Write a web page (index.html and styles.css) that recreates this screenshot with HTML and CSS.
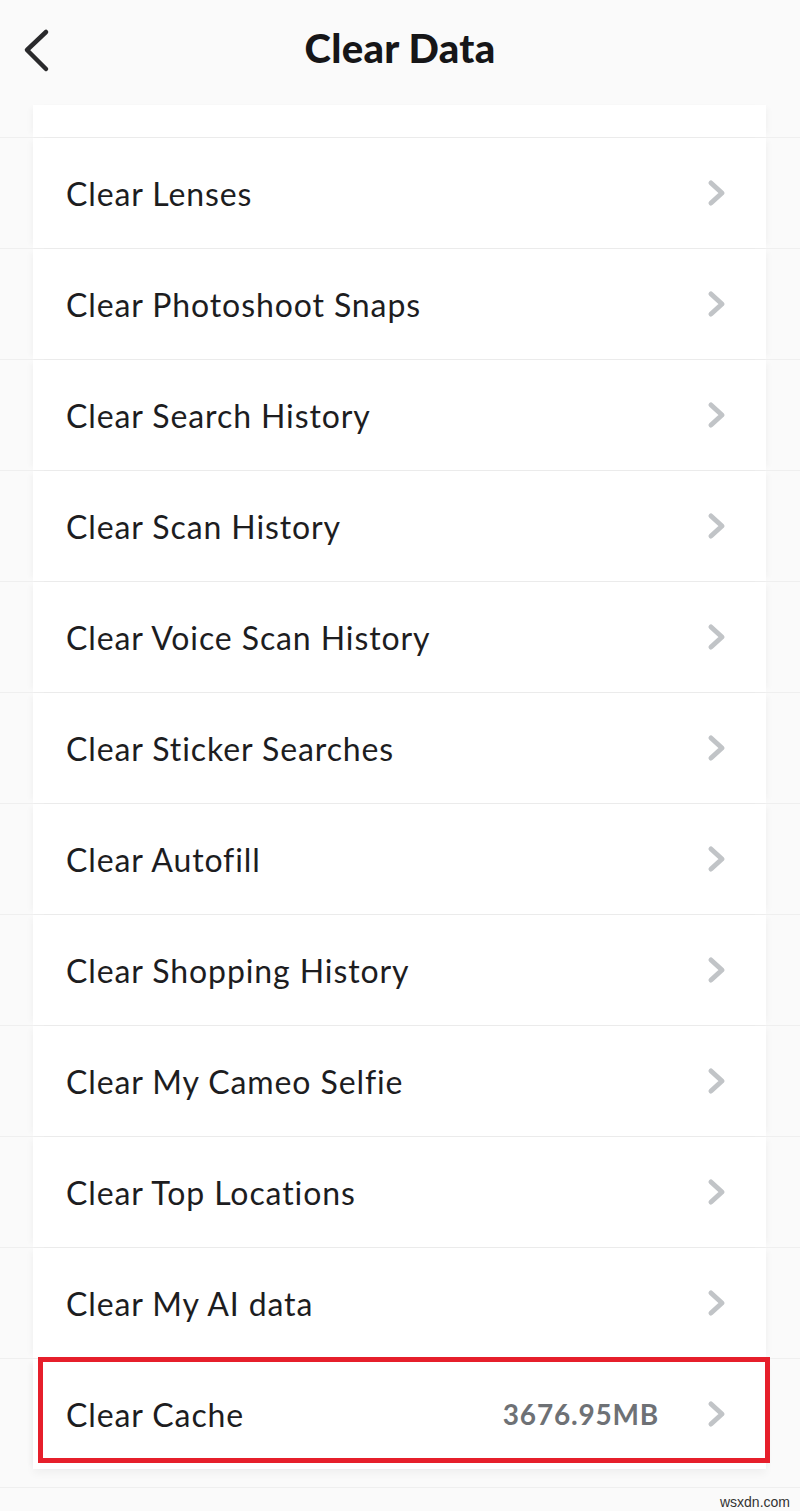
FILE: index.html
```html
<!DOCTYPE html>
<html lang="en">
<head>
    <meta charset="UTF-8">
    <meta name="viewport" content="width=device-width, initial-scale=1.0">
    <title>Clear Data</title>
    <link rel="stylesheet" href="styles.css">
</head>
<body>
    <header class="topbar">
        <button class="back" aria-label="Back">
            <svg width="30" height="46" viewBox="0 0 30 46"><path d="M26 5 L7 23 L26 42" fill="none" stroke="#2a2a2c" stroke-width="4.5" stroke-linecap="round" stroke-linejoin="round"/></svg>
        </button>
        <h1 class="title">Clear Data</h1>
    </header>

    <main class="list">
        <div class="row row-top"><div class="cell"></div></div>
        <div class="row"><div class="cell"><span class="label">Clear Lenses</span><span class="chev"></span></div></div>
        <div class="row"><div class="cell"><span class="label">Clear Photoshoot Snaps</span><span class="chev"></span></div></div>
        <div class="row"><div class="cell"><span class="label">Clear Search History</span><span class="chev"></span></div></div>
        <div class="row"><div class="cell"><span class="label">Clear Scan History</span><span class="chev"></span></div></div>
        <div class="row"><div class="cell"><span class="label">Clear Voice Scan History</span><span class="chev"></span></div></div>
        <div class="row"><div class="cell"><span class="label">Clear Sticker Searches</span><span class="chev"></span></div></div>
        <div class="row"><div class="cell"><span class="label">Clear Autofill</span><span class="chev"></span></div></div>
        <div class="row"><div class="cell"><span class="label">Clear Shopping History</span><span class="chev"></span></div></div>
        <div class="row"><div class="cell"><span class="label">Clear My Cameo Selfie</span><span class="chev"></span></div></div>
        <div class="row"><div class="cell"><span class="label">Clear Top Locations</span><span class="chev"></span></div></div>
        <div class="row"><div class="cell"><span class="label">Clear My AI data</span><span class="chev"></span></div></div>
        <div class="row"><div class="cell cell-last"><span class="label">Clear Cache</span><span class="value">3676.95MB</span><span class="chev"></span><div class="highlight"></div></div></div>
    </main>

    <footer class="footer">
        <span class="mark">wsxdn.com</span>
    </footer>

    <script>
        // draw the same grey chevron in every row
        document.querySelectorAll('.chev').forEach(el => {
            el.innerHTML = '<svg width="20" height="28" viewBox="0 0 20 28"><path d="M4 4 L15 14 L4 24" fill="none" stroke="#c1c4c7" stroke-width="5" stroke-linecap="round" stroke-linejoin="round"/></svg>';
        });
    </script>
</body>
</html>
```

FILE: styles.css
```css
body {
    margin: 0;
    background-color: #fafafa;
    font-family: Lato, "Liberation Sans", sans-serif;
    color: #1c1c1e;
}
.topbar {
    position: relative;
    height: 96px;
    padding-bottom: 9px;
    display: flex;
    align-items: center;
    justify-content: center;
}
.back {
    position: absolute;
    left: 20px;
    top: 27px;
    padding: 0;
    border: none;
    background: none;
    line-height: 0;
}
.title {
    margin: 0;
    font-size: 40px;
    font-weight: 900;
    letter-spacing: 0.3px;
    color: #161618;
}
.row {
    border-top: 1px solid #efefef;
}
.row-top {
    border-top: none;
}
.row-top .cell {
    height: 32px;
}
.cell {
    position: relative;
    margin: 0 34px 0 33px;
    height: 110px;
    padding: 0 39px 0 33px;
    display: flex;
    align-items: center;
    background-color: #ffffff;
    box-shadow: -5px 0 6px -3px rgba(0, 0, 0, 0.035), 5px 0 6px -3px rgba(0, 0, 0, 0.035);
}
.label {
    flex: 1;
    font-size: 32px;
    letter-spacing: 0.9px;
    color: #1d1d1f;
}
.value {
    margin-right: 48px;
    font-size: 28px;
    font-weight: 700;
    letter-spacing: 0.8px;
    color: #6e7175;
}
.chev {
    line-height: 0;
}
.cell-last {
    box-shadow: -5px 0 6px -3px rgba(0, 0, 0, 0.035), 5px 0 6px -3px rgba(0, 0, 0, 0.035), 0 5px 8px rgba(0, 0, 0, 0.04);
}
.highlight {
    position: absolute;
    left: 5px;
    right: -4px;
    top: -2px;
    bottom: 6px;
    border: 5px solid #e61f2b;
}
.footer {
    position: relative;
    height: 42px;
}
.footer::before {
    content: "";
    position: absolute;
    left: 0;
    right: 0;
    top: 18px;
    border-top: 1px solid #efefef;
}
.mark {
    position: absolute;
    right: 10px;
    top: 25px;
    font-family: "Liberation Sans", sans-serif;
    font-size: 14px;
    color: #333;
}
```
